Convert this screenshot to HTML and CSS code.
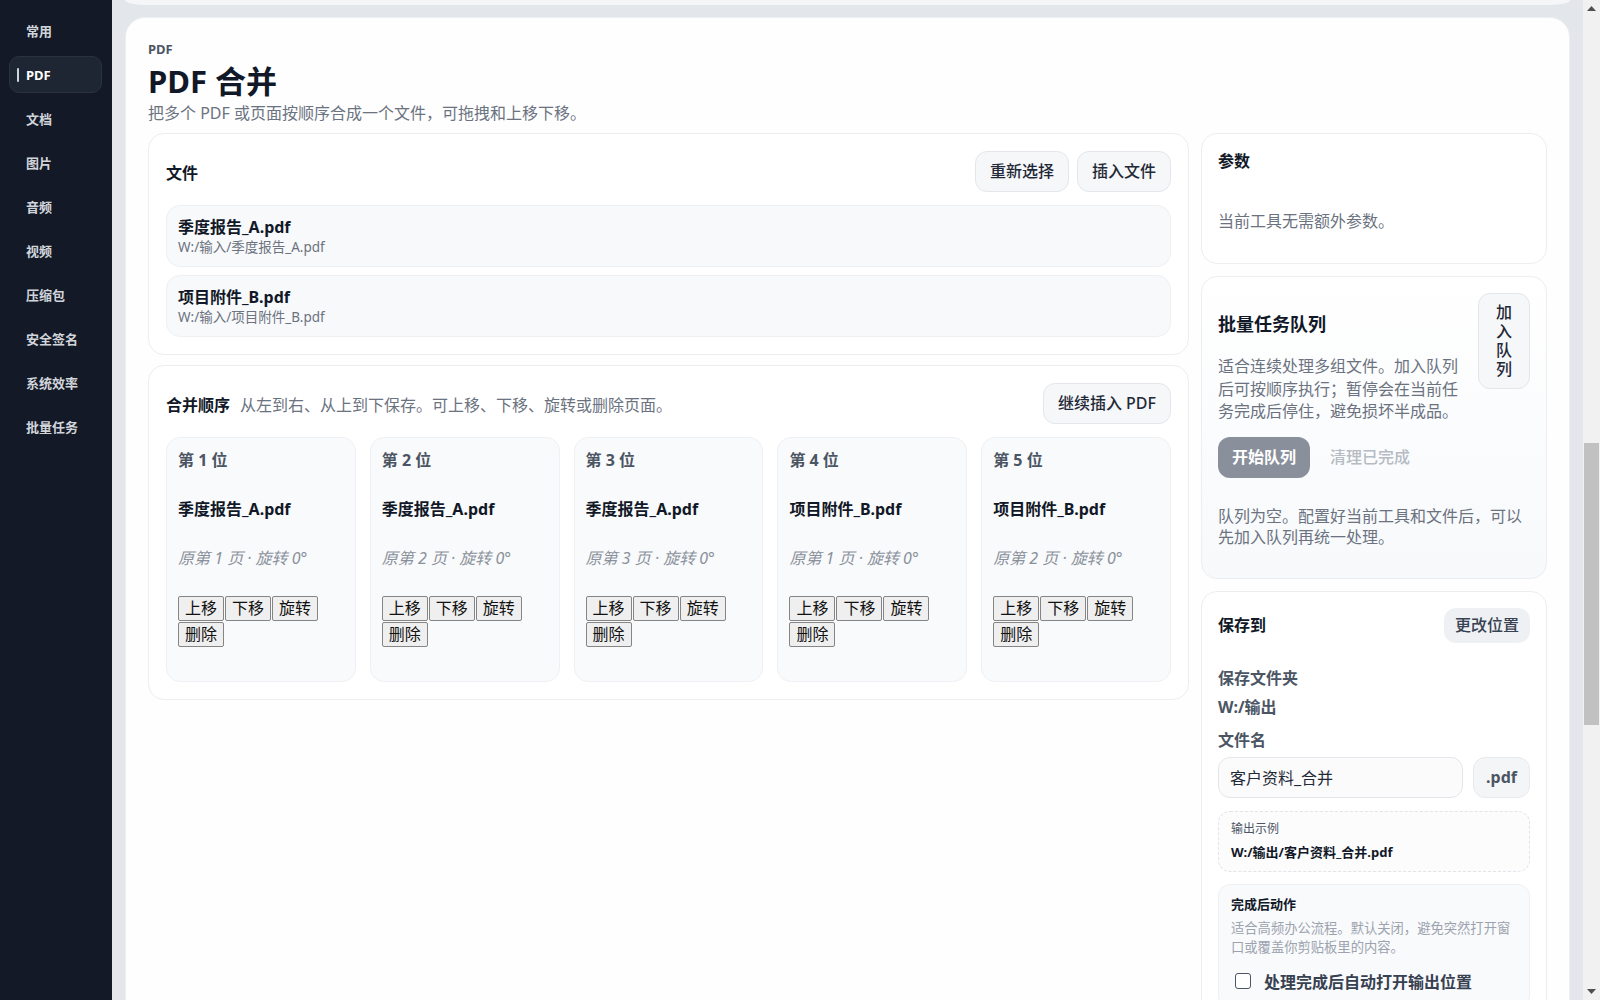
FILE: index.html
```html
<!DOCTYPE html>
<html lang="zh-CN">
<head>
<meta charset="utf-8">
<title>PDF 合并</title>
<link rel="stylesheet" href="styles.css">
</head>
<body>
<div class="app">
  <aside class="sidebar">
    <nav class="nav">
      <a class="nav-item" href="#">常用</a>
      <a class="nav-item active" href="#">PDF</a>
      <a class="nav-item" href="#">文档</a>
      <a class="nav-item" href="#">图片</a>
      <a class="nav-item" href="#">音频</a>
      <a class="nav-item" href="#">视频</a>
      <a class="nav-item" href="#">压缩包</a>
      <a class="nav-item" href="#">安全签名</a>
      <a class="nav-item" href="#">系统效率</a>
      <a class="nav-item" href="#">批量任务</a>
    </nav>
  </aside>

  <main class="content">
    <div class="prev-card"></div>

    <section class="tool-card">
      <header class="tool-head">
        <div class="eyebrow">PDF</div>
        <h1 class="tool-title">PDF 合并</h1>
        <p class="tool-desc">把多个 PDF 或页面按顺序合成一个文件，可拖拽和上移下移。</p>
      </header>

      <div class="tool-grid">
        <div class="col-main">
          <div class="panel">
            <div class="panel-head">
              <div class="panel-title">文件</div>
              <div class="btn-group">
                <button class="btn">重新选择</button>
                <button class="btn">插入文件</button>
              </div>
            </div>
            <div class="file-list">
              <div class="file-item">
                <div class="file-name">季度报告_A.pdf</div>
                <div class="file-path">W:/输入/季度报告_A.pdf</div>
              </div>
              <div class="file-item">
                <div class="file-name">项目附件_B.pdf</div>
                <div class="file-path">W:/输入/项目附件_B.pdf</div>
              </div>
            </div>
          </div>

          <div class="panel">
            <div class="panel-head">
              <div class="order-heading">
                <span class="panel-title">合并顺序</span>
                <span class="order-hint">从左到右、从上到下保存。可上移、下移、旋转或删除页面。</span>
              </div>
              <button class="btn">继续插入 PDF</button>
            </div>
            <div class="pages">
              <div class="page-card">
                <div class="page-pos">第 1 位</div>
                <div class="page-name">季度报告_A.pdf</div>
                <div class="page-meta">原第 1 页 · 旋转 0°</div>
                <div class="page-actions">
                  <button class="mini-btn">上移</button><button class="mini-btn">下移</button><button class="mini-btn">旋转</button><button class="mini-btn">删除</button>
                </div>
              </div>
              <div class="page-card">
                <div class="page-pos">第 2 位</div>
                <div class="page-name">季度报告_A.pdf</div>
                <div class="page-meta">原第 2 页 · 旋转 0°</div>
                <div class="page-actions">
                  <button class="mini-btn">上移</button><button class="mini-btn">下移</button><button class="mini-btn">旋转</button><button class="mini-btn">删除</button>
                </div>
              </div>
              <div class="page-card">
                <div class="page-pos">第 3 位</div>
                <div class="page-name">季度报告_A.pdf</div>
                <div class="page-meta">原第 3 页 · 旋转 0°</div>
                <div class="page-actions">
                  <button class="mini-btn">上移</button><button class="mini-btn">下移</button><button class="mini-btn">旋转</button><button class="mini-btn">删除</button>
                </div>
              </div>
              <div class="page-card">
                <div class="page-pos">第 4 位</div>
                <div class="page-name">项目附件_B.pdf</div>
                <div class="page-meta">原第 1 页 · 旋转 0°</div>
                <div class="page-actions">
                  <button class="mini-btn">上移</button><button class="mini-btn">下移</button><button class="mini-btn">旋转</button><button class="mini-btn">删除</button>
                </div>
              </div>
              <div class="page-card">
                <div class="page-pos">第 5 位</div>
                <div class="page-name">项目附件_B.pdf</div>
                <div class="page-meta">原第 2 页 · 旋转 0°</div>
                <div class="page-actions">
                  <button class="mini-btn">上移</button><button class="mini-btn">下移</button><button class="mini-btn">旋转</button><button class="mini-btn">删除</button>
                </div>
              </div>
            </div>
          </div>
        </div>

        <div class="col-side">
          <div class="side-card params-card">
            <div class="side-title">参数</div>
            <p class="params-empty">当前工具无需额外参数。</p>
          </div>

          <div class="side-card queue-card">
            <div class="queue-head">
              <div class="queue-info">
                <h3 class="queue-title">批量任务队列</h3>
                <p class="queue-desc">适合连续处理多组文件。加入队列后可按顺序执行；暂停会在当前任务完成后停住，避免损坏半成品。</p>
              </div>
              <button class="btn queue-add">加入队列</button>
            </div>
            <div class="queue-actions">
              <button class="btn btn-start">开始队列</button>
              <button class="btn btn-ghost">清理已完成</button>
            </div>
            <p class="queue-empty">队列为空。配置好当前工具和文件后，可以先加入队列再统一处理。</p>
          </div>

          <div class="side-card save-card">
            <div class="save-head">
              <div class="side-title">保存到</div>
              <button class="btn btn-soft">更改位置</button>
            </div>
            <div class="field-label first">保存文件夹</div>
            <div class="field-value">W:/输出</div>
            <div class="field-label name-label">文件名</div>
            <div class="name-row">
              <input class="name-input" type="text" value="客户资料_合并">
              <div class="ext">.pdf</div>
            </div>
            <div class="example">
              <div class="example-label">输出示例</div>
              <div class="example-path">W:/输出/客户资料_合并.pdf</div>
            </div>
            <div class="after">
              <div class="after-title">完成后动作</div>
              <p class="after-desc">适合高频办公流程。默认关闭，避免突然打开窗口或覆盖你剪贴板里的内容。</p>
              <label class="check-row"><input class="check" type="checkbox">处理完成后自动打开输出位置</label>
            </div>
          </div>
        </div>
      </div>
    </section>
  </main>

  <div class="scrollbar" aria-hidden="true">
    <div class="sb-arrow">
      <svg width="9" height="5" viewBox="0 0 9 5"><polygon points="0,5 9,5 4.5,0" fill="#505050"/></svg>
    </div>
    <div class="sb-track"><div class="sb-thumb"></div></div>
    <div class="sb-arrow">
      <svg width="9" height="5" viewBox="0 0 9 5"><polygon points="0,0 9,0 4.5,5" fill="#505050"/></svg>
    </div>
  </div>
</div>
</body>
</html>
```

FILE: styles.css
```css
* { box-sizing: border-box; }

html,
body {
  margin: 0;
  height: 100%;
  background: #e3e6eb;
}

body {
  font-family: "Noto Sans", "Noto Sans CJK SC", sans-serif;
  color: #111827;
}

.app {
  display: flex;
  height: 100vh;
  overflow: hidden;
}

/* Sidebar */
.sidebar {
  flex: none;
  width: 112px;
  background: #131926;
  padding: 12px 10px 12px 9px;
}

.nav {
  display: flex;
  flex-direction: column;
  gap: 7px;
}

.nav-item {
  position: relative;
  display: flex;
  align-items: center;
  height: 37px;
  padding-left: 16px;
  border: 1px solid transparent;
  border-radius: 10px;
  color: #d1d5db;
  font-size: 13px;
  font-weight: 700;
  text-decoration: none;
}

.nav-item.active {
  background: #1f2633;
  border-color: #2a3241;
  color: #ffffff;
}

.nav-item.active::before {
  content: "";
  position: absolute;
  left: 7px;
  top: 11px;
  width: 2px;
  height: 14px;
  border-radius: 1px;
  background: #cbd5e1;
}

/* Content */
.content {
  flex: 1;
  min-width: 0;
  padding: 0 13px;
  display: flex;
  flex-direction: column;
  gap: 12px;
  overflow: hidden;
}

.prev-card {
  flex: none;
  height: 5px;
  background: #f5f6f8;
  border-radius: 0 0 20px 20px / 0 0 5px 5px;
}

.tool-card {
  flex: none;
  background: #fefefe;
  border: 1px solid #eceef2;
  border-radius: 20px;
  padding: 22px 22px 40px;
}

.eyebrow {
  font-size: 13px;
  line-height: 18px;
  font-weight: 700;
  color: #4b5563;
}

.tool-title {
  margin: 3px 0 0;
  font-size: 31px;
  line-height: 40px;
  font-weight: 700;
  color: #111827;
}

.tool-desc {
  margin: 0;
  font-size: 16px;
  line-height: 24px;
  color: #6b7280;
}

.tool-grid {
  margin-top: 8px;
  display: grid;
  grid-template-columns: minmax(0, 1fr) 346px;
  gap: 12px;
  align-items: start;
}

.col-main {
  display: flex;
  flex-direction: column;
  gap: 10px;
}

.col-side {
  display: flex;
  flex-direction: column;
  gap: 12px;
}

/* Panels */
.panel {
  background: #ffffff;
  border: 1px solid #eceef2;
  border-radius: 16px;
  padding: 17px;
}

.panel-head {
  display: flex;
  align-items: center;
  justify-content: space-between;
  gap: 12px;
  min-height: 41px;
  margin-bottom: 13px;
}

.panel-title {
  font-size: 16px;
  font-weight: 700;
  color: #111827;
}

.btn-group {
  display: flex;
  gap: 8px;
}

.btn {
  font-family: inherit;
  font-size: 16px;
  font-weight: 500;
  line-height: 19px;
  padding: 10px 14px;
  border: 1px solid #e3e6eb;
  border-radius: 12px;
  background: #f6f7f9;
  color: #1f2937;
  white-space: nowrap;
}

.file-list {
  display: flex;
  flex-direction: column;
  gap: 8px;
}

.file-item {
  background: #f8f9fb;
  border: 1px solid #eef0f3;
  border-radius: 14px;
  padding: 10px 12px 10px 11px;
}

.file-name {
  font-size: 16px;
  line-height: 22px;
  font-weight: 700;
  color: #111827;
}

.file-path {
  font-size: 13.5px;
  line-height: 18px;
  color: #6b7280;
}

.order-heading {
  display: flex;
  align-items: baseline;
  gap: 10px;
}

.order-hint {
  font-size: 16px;
  color: #6b7280;
}

.pages {
  display: grid;
  grid-template-columns: repeat(5, minmax(0, 1fr));
  gap: 14px;
}

.page-card {
  min-height: 245px;
  background: #f9fafb;
  border: 1px solid #eef0f3;
  border-radius: 14px;
  padding: 11px;
  display: flex;
  flex-direction: column;
  gap: 27px;
}

.page-pos {
  font-size: 16px;
  line-height: 22px;
  font-weight: 700;
  color: #4b5563;
}

.page-name {
  font-size: 16px;
  line-height: 22px;
  font-weight: 700;
  color: #111827;
}

.page-meta {
  font-size: 16px;
  line-height: 22px;
  font-style: italic;
  color: #8a919c;
}

.page-actions {
  display: flex;
  flex-wrap: wrap;
  gap: 1px;
}

.mini-btn {
  font-family: inherit;
  font-size: 16px;
  line-height: 19px;
  padding: 2px 6px;
  margin: 0;
  border: 1px solid #858585;
  border-radius: 2px;
  background: #efefef;
  color: #111111;
}

/* Side cards */
.side-card {
  background: #ffffff;
  border: 1px solid #eceef2;
  border-radius: 16px;
  padding: 16px;
}

.side-title {
  font-size: 16px;
  line-height: 22px;
  font-weight: 700;
  color: #111827;
}

.params-card {
  padding-bottom: 31px;
}

.params-empty {
  margin: 38px 0 0;
  font-size: 16px;
  line-height: 22px;
  color: #6b7280;
}

.queue-card {
  background: linear-gradient(180deg, #ffffff 0%, #f7f9fb 100%);
}

.queue-head {
  display: flex;
  align-items: flex-start;
  gap: 16px;
}

.queue-info {
  flex: 1;
  min-width: 0;
}

.queue-title {
  margin: 18px 0 0;
  font-size: 18px;
  line-height: 26px;
  font-weight: 700;
  color: #111827;
}

.queue-desc {
  margin: 18px 0 0;
  font-size: 16px;
  line-height: 22.5px;
  color: #6b7280;
}

.queue-add {
  flex: none;
  width: min-content;
  white-space: normal;
  padding: 9px 17px;
}

.queue-actions {
  margin-top: 14px;
  display: flex;
  align-items: center;
  gap: 6px;
}

.btn-start {
  padding: 10px 13px;
  border-color: transparent;
  background: #8a909b;
  color: #ffffff;
  font-weight: 700;
}

.btn-ghost {
  padding: 10px 13px;
  border-color: transparent;
  background: transparent;
  color: #b6bbc4;
}

.queue-empty {
  margin: 28px 0 14px;
  font-size: 16px;
  line-height: 21px;
  color: #6b7280;
}

.save-head {
  display: flex;
  align-items: center;
  justify-content: space-between;
}

.btn-soft {
  padding: 7px 10px;
  border-color: transparent;
  background: #eef0f3;
  color: #374151;
}

.field-label,
.field-value {
  font-size: 16px;
  line-height: 22px;
  font-weight: 700;
  color: #4b5563;
}

.field-label.first {
  margin-top: 24px;
}

.field-value {
  margin-top: 7px;
}

.field-label.name-label {
  margin-top: 11px;
}

.name-row {
  margin-top: 6px;
  display: flex;
  gap: 10px;
}

.name-input {
  flex: 1;
  min-width: 0;
  height: 41px;
  padding: 0 11px;
  border: 1px solid #e3e6eb;
  border-radius: 12px;
  background: #fbfbfc;
  font-family: inherit;
  font-size: 16px;
  color: #1f2937;
  outline: none;
}

.ext {
  flex: none;
  width: 57px;
  height: 41px;
  display: flex;
  align-items: center;
  justify-content: center;
  border: 1px solid #e8eaee;
  border-radius: 12px;
  background: #f4f5f7;
  font-size: 16px;
  font-weight: 700;
  color: #4b5563;
}

.example {
  margin-top: 13px;
  padding: 9px 12px 10px;
  border: 1px dashed #e1e4e9;
  border-radius: 12px;
  background: #fcfcfd;
}

.example-label {
  font-size: 12px;
  line-height: 16px;
  color: #4b5563;
}

.example-path {
  margin-top: 6px;
  font-size: 13px;
  line-height: 18px;
  font-weight: 700;
  color: #111827;
}

.after {
  margin-top: 12px;
  padding: 10px 12px 14px;
  border: 1px solid #eef0f3;
  border-radius: 12px;
  background: #f9fafb;
}

.after-title {
  font-size: 13px;
  line-height: 18px;
  font-weight: 700;
  color: #111827;
}

.after-desc {
  margin: 6px 0 0;
  font-size: 13.3px;
  line-height: 19px;
  color: #9ca3af;
}

.check-row {
  margin-top: 12px;
  display: flex;
  align-items: center;
  gap: 13px;
  padding-left: 4px;
  min-height: 24px;
  font-size: 16px;
  font-weight: 700;
  color: #374151;
}

.check {
  appearance: none;
  flex: none;
  width: 16px;
  height: 16px;
  margin: 0;
  border: 1.5px solid #4b5563;
  border-radius: 3px;
  background: #ffffff;
}

/* Window scrollbar */
.scrollbar {
  flex: none;
  width: 17px;
  display: flex;
  flex-direction: column;
  background: #f1f1f1;
}

.sb-arrow {
  flex: none;
  height: 17px;
  display: flex;
  align-items: center;
  justify-content: center;
}

.sb-track {
  flex: 1;
  padding-top: 426px;
}

.sb-thumb {
  height: 282px;
  margin: 0 1px;
  background: #c1c1c1;
}
```
